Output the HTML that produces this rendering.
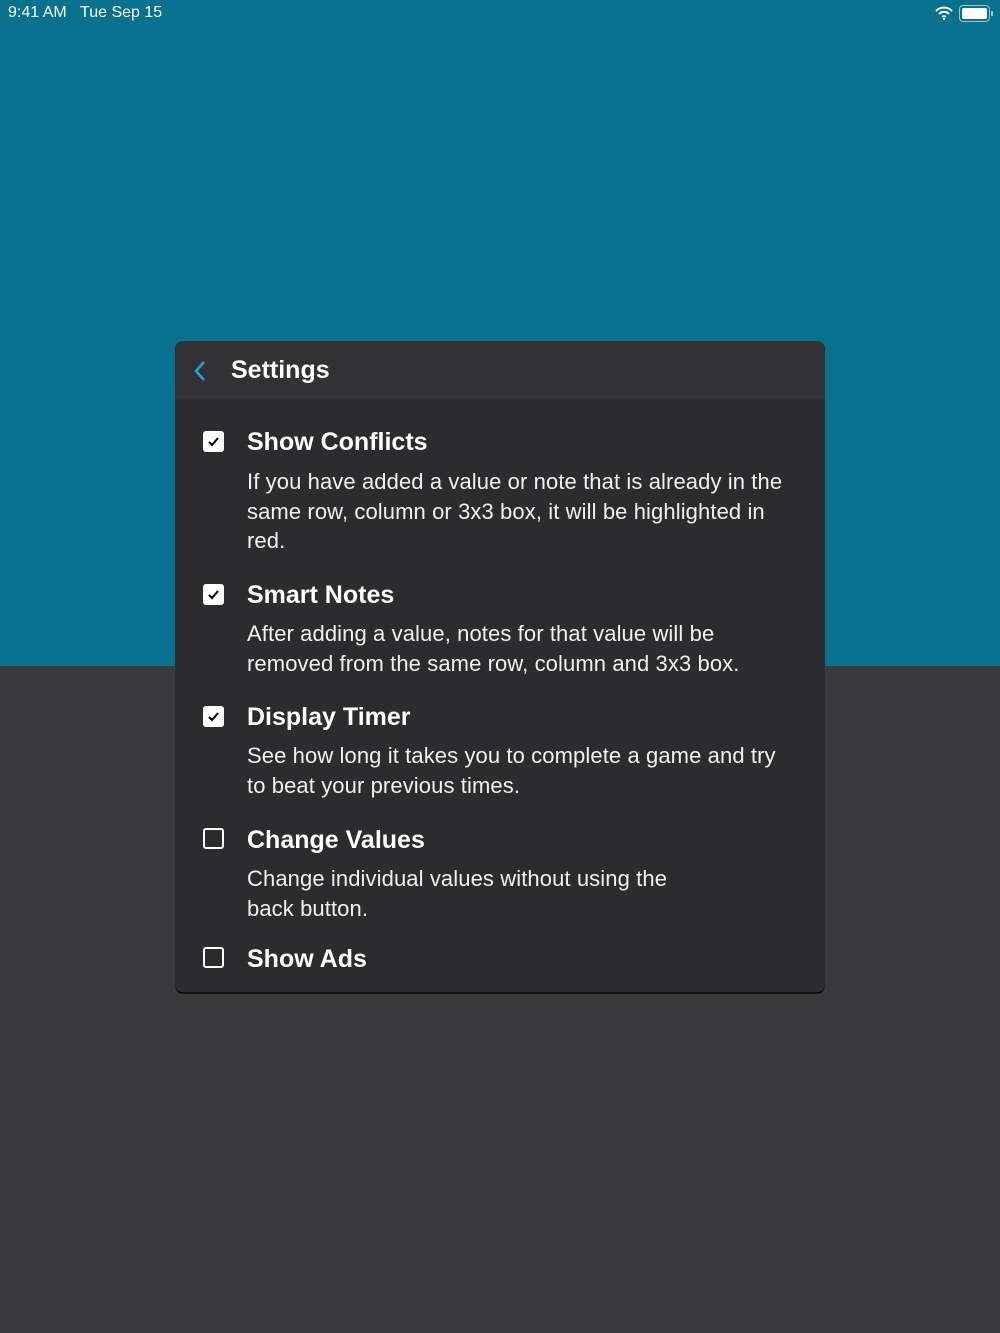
<!DOCTYPE html>
<html><head><meta charset="utf-8"><style>
*{margin:0;padding:0;box-sizing:border-box}
body{width:1000px;height:1333px;position:relative;overflow:hidden;background:#3a3a3c;font-family:"Liberation Sans",sans-serif;color:#fff}
.top{position:absolute;left:0;top:0;width:1000px;height:666px;background:#08718e}
.sb{position:absolute;top:4px;font-size:16px;color:#fff}
.panel{position:absolute;left:175px;top:341px;width:650px;height:653px;background:#2c2c2e;border-radius:8px;overflow:hidden;border-bottom:2px solid #111}
.hdr{position:absolute;left:0;top:0;width:650px;height:58px;background:#323234}
.t{position:absolute;white-space:nowrap}
.h{font-size:25px;font-weight:bold;left:72px}
.d{font-size:22px;left:72px;color:#f2f2f2;letter-spacing:0.1px}
.cb{position:absolute;left:28px;width:21px;height:21px;border-radius:3px}
.on{background:#fff}
.off{border:2px solid #fff}
</style></head><body>
<div class="top"></div>
<div class="sb" style="left:8px">9:41 AM&nbsp;&nbsp;&nbsp;Tue Sep 15</div>
<svg style="position:absolute;left:934px;top:6px" width="20" height="14" viewBox="0 0 20 14"><path d="M2 5a11 11 0 0 1 16 0M5 8a7 7 0 0 1 10 0M8 11a3 3 0 0 1 4 0" stroke="#fff" stroke-width="2" fill="none"/><circle cx="10" cy="13" r="1.2" fill="#fff"/></svg>
<div style="position:absolute;left:959px;top:5px;width:31px;height:17px;border:1px solid #9fc3cf;border-radius:4px;padding:2px"><div style="width:100%;height:100%;background:#fff;border-radius:2px"></div></div>
<div style="position:absolute;left:991px;top:11px;width:2px;height:5px;background:#9fc3cf"></div>
<div class="panel">
<div class="hdr"></div>
<svg style="position:absolute;left:19px;top:19px" width="14" height="22" viewBox="0 0 14 22"><path d="M10 2L2 11l8 9" stroke="#1aa7d8" stroke-width="2.5" fill="none"/></svg>
<div class="t" style="left:56px;top:15px;font-size:25px;font-weight:bold">Settings</div>

<div class="cb on" style="top:90px"></div><svg style="position:absolute;left:28px;top:90px" width="21" height="21"><path d="M6 11l3 3 6-7" stroke="#000" stroke-width="2" fill="none"/></svg>
<div class="t h" style="top:87px">Show Conflicts</div>
<div class="t d" style="top:128px">If you have added a value or note that is already in the</div>
<div class="t d" style="top:158px">same row, column or 3x3 box, it will be highlighted in</div>
<div class="t d" style="top:187px">red.</div>

<div class="cb on" style="top:243px"></div><svg style="position:absolute;left:28px;top:243px" width="21" height="21"><path d="M6 11l3 3 6-7" stroke="#000" stroke-width="2" fill="none"/></svg>
<div class="t h" style="top:240px">Smart Notes</div>
<div class="t d" style="top:280px">After adding a value, notes for that value will be</div>
<div class="t d" style="top:310px">removed from the same row, column and 3x3 box.</div>

<div class="cb on" style="top:365px"></div><svg style="position:absolute;left:28px;top:365px" width="21" height="21"><path d="M6 11l3 3 6-7" stroke="#000" stroke-width="2" fill="none"/></svg>
<div class="t h" style="top:362px">Display Timer</div>
<div class="t d" style="top:402px">See how long it takes you to complete a game and try</div>
<div class="t d" style="top:432px">to beat your previous times.</div>

<div class="cb off" style="top:487px"></div>
<div class="t h" style="top:485px">Change Values</div>
<div class="t d" style="top:525px">Change individual values without using the</div>
<div class="t d" style="top:555px">back button.</div>

<div class="cb off" style="top:606px"></div>
<div class="t h" style="top:604px">Show Ads</div>
</div>
</body></html>
